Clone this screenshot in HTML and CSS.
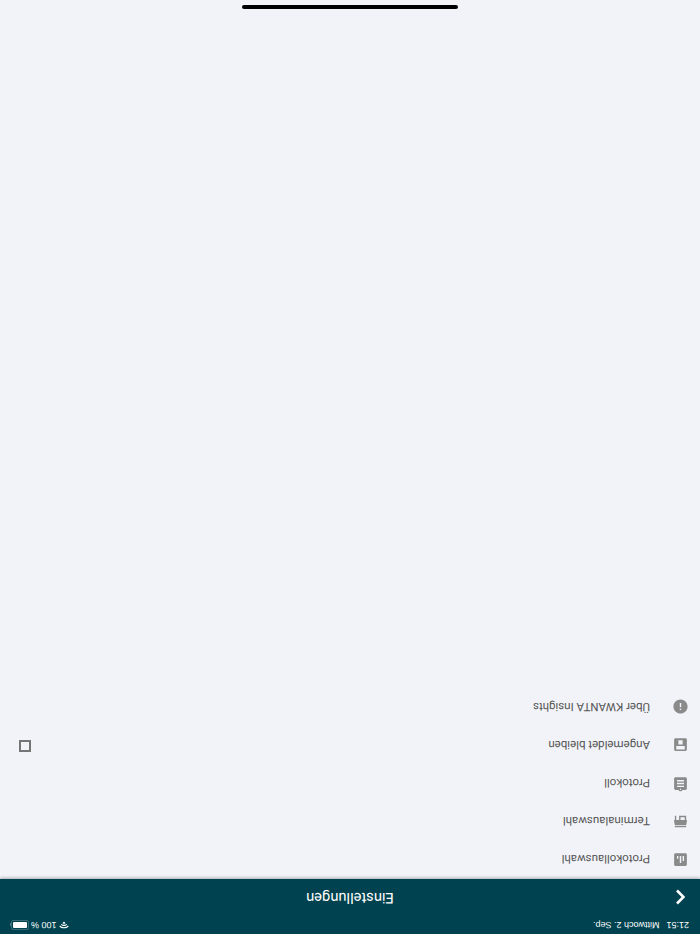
FILE: index.html
```html
<!DOCTYPE html>
<html lang="de">
<head>
  <meta charset="UTF-8" />
  <title>Einstellungen</title>
  <link rel="stylesheet" href="styles.css">
</head>
<body>
  <div class="screen">
    <header class="top">
      <div class="status-bar">
        <div class="status-left">
          <span>21:51</span>
          <span>Mittwoch 2. Sep.</span>
        </div>
        <div class="status-right">
          <svg class="wifi" viewBox="0 0 24 18"><path d="M12 1C7.500 1 3.600 2.700.6 5.500l2 2.100C5 5.300 8.300 3.900 12 3.900s7 1.400 9.400 3.700l2-2.100C20.400 2.700 16.500 1 12 1z"/><path d="M12 6.500c-2.900 0-5.500 1.100-7.500 3l2 2.100C8 10.200 9.900 9.400 12 9.400s4 .8 5.500 2.200l2-2.100c-2-1.900-4.600-3-7.500-3z"/><path d="M12 12c-1.400 0-2.700.5-3.700 1.500L12 17.300l3.700-3.800c-1-1-2.300-1.500-3.700-1.500z"/></svg>
          <span>100 %</span>
          <div class="battery"><div class="battery-fill"></div></div>
          <div class="battery-tip"></div>
        </div>
      </div>
      <div class="nav">
        <svg class="back" viewBox="0 0 10 16"><path d="M8 1.500 1.500 8 8 14.500"/></svg>
        <h1>Einstellungen</h1>
      </div>
    </header>

    <main class="list">
      <div class="row">
        <svg class="icon" viewBox="0 0 24 24"><path d="M19 3H5c-1.100 0-2 .9-2 2v14c0 1.100.9 2 2 2h14c1.100 0 2-.9 2-2V5c0-1.100-.9-2-2-2zM9 17H7v-7h2v7zm4 0h-2V7h2v10zm4 0h-2v-4h2v4z"/></svg>
        <span>Protokollauswahl</span>
      </div>
      <div class="row">
        <svg class="icon" viewBox="0 0 24 24"><path d="M20 4H4v2h16V4zm1 10v-2l-1-5H4l-1 5v2h1v6h10v-6h4v6h2v-6h1zm-9 4H6v-4h6v4z"/></svg>
        <span>Terminalauswahl</span>
      </div>
      <div class="row">
        <svg class="icon" viewBox="0 0 24 24"><path d="M19 3h-4.180C14.400 1.840 13.300 1 12 1c-1.300 0-2.400.84-2.820 2H5c-1.100 0-2 .9-2 2v14c0 1.100.9 2 2 2h14c1.100 0 2-.9 2-2V5c0-1.100-.9-2-2-2zm-7 0c.55 0 1 .45 1 1s-.45 1-1 1-1-.45-1-1 .45-1 1-1zm5 14H7v-2h10v2zm0-4H7v-2h10v2zm0-4H7V7h10v2z"/></svg>
        <span>Protokoll</span>
      </div>
      <div class="row">
        <svg class="icon" viewBox="0 0 24 24"><path d="M19 3H5c-1.100 0-2 .9-2 2v14c0 1.100.9 2 2 2h14c1.100 0 2-.9 2-2V5c0-1.100-.9-2-2-2zM6 5h12v5H6V5zm3 7h6v6H9v-6z"/></svg>
        <span>Angemeldet bleiben</span>
        <div class="checkbox"></div>
      </div>
      <div class="row">
        <svg class="icon" viewBox="0 0 24 24"><path d="M12 2C6.480 2 2 6.480 2 12s4.480 10 10 10 10-4.480 10-10S17.520 2 12 2zm1 15h-2v-6h2v6zm0-8h-2V7h2v2z"/></svg>
        <span>Über KWANTA Insights</span>
      </div>
    </main>

    <div class="home-indicator"></div>
  </div>
</body>
</html>
```

FILE: styles.css
```css
html, body {
  margin: 0;
  padding: 0;
  height: 100%;
  overflow: hidden;
  background: #f1f3f8;
}

.screen {
  width: 700px;
  height: 934px;
  display: flex;
  flex-direction: column;
  transform: rotate(180deg);
  font-family: Roboto, "Liberation Sans", sans-serif;
  text-rendering: geometricPrecision;
  background: #f1f3f8;
}

.top {
  height: 55px;
  flex-shrink: 0;
  background: #00424f;
  color: #fff;
  box-shadow: 0 1px 3px rgba(0, 0, 0, 0.3);
}

.status-bar {
  height: 18px;
  padding: 0 10px 0 11px;
  display: flex;
  justify-content: space-between;
  align-items: center;
  font-size: 9px;
  font-family: "Liberation Sans", sans-serif;
}

.status-left {
  display: flex;
  gap: 7px;
}

.status-right {
  display: flex;
  align-items: center;
  gap: 2px;
}

.wifi {
  width: 10px;
  height: 8px;
  fill: #fff;
}

.battery {
  width: 14px;
  height: 6px;
  padding: 1px;
  border: 1px solid rgba(255, 255, 255, 0.22);
  border-radius: 2px;
}

.battery-fill {
  height: 100%;
  background: #fff;
  border-radius: 1px;
}

.battery-tip {
  width: 1px;
  height: 3px;
  margin-left: -2px;
  background: rgba(255, 255, 255, 0.3);
}

.nav {
  height: 37px;
  padding-left: 15px;
  display: grid;
  grid-template-columns: 1fr auto 1fr;
  align-items: center;
}

.nav h1 {
  margin: 0 0 1px -15px;
  font-size: 14.7px;
  font-weight: 400;
}

.back {
  width: 10px;
  height: 16px;
  fill: none;
  stroke: #fff;
  stroke-width: 2.6;
}

.list {
  flex: 1;
  padding-top: 0.5px;
}

.row {
  height: 38.2px;
  padding: 0 19px 0 11px;
  display: flex;
  align-items: center;
  font-size: 11.5px;
  color: #555;
}

.row span {
  margin-left: 22px;
}

.icon {
  width: 17px;
  height: 17px;
  fill: #8a8a8a;
  flex-shrink: 0;
}

.checkbox {
  width: 8px;
  height: 8px;
  margin: 0 0 2px auto;
  border: 2px solid #757575;
}

.home-indicator {
  width: 216px;
  height: 4px;
  margin: 0 auto 5px;
  background: #000;
  border-radius: 2px;
  flex-shrink: 0;
}
```
